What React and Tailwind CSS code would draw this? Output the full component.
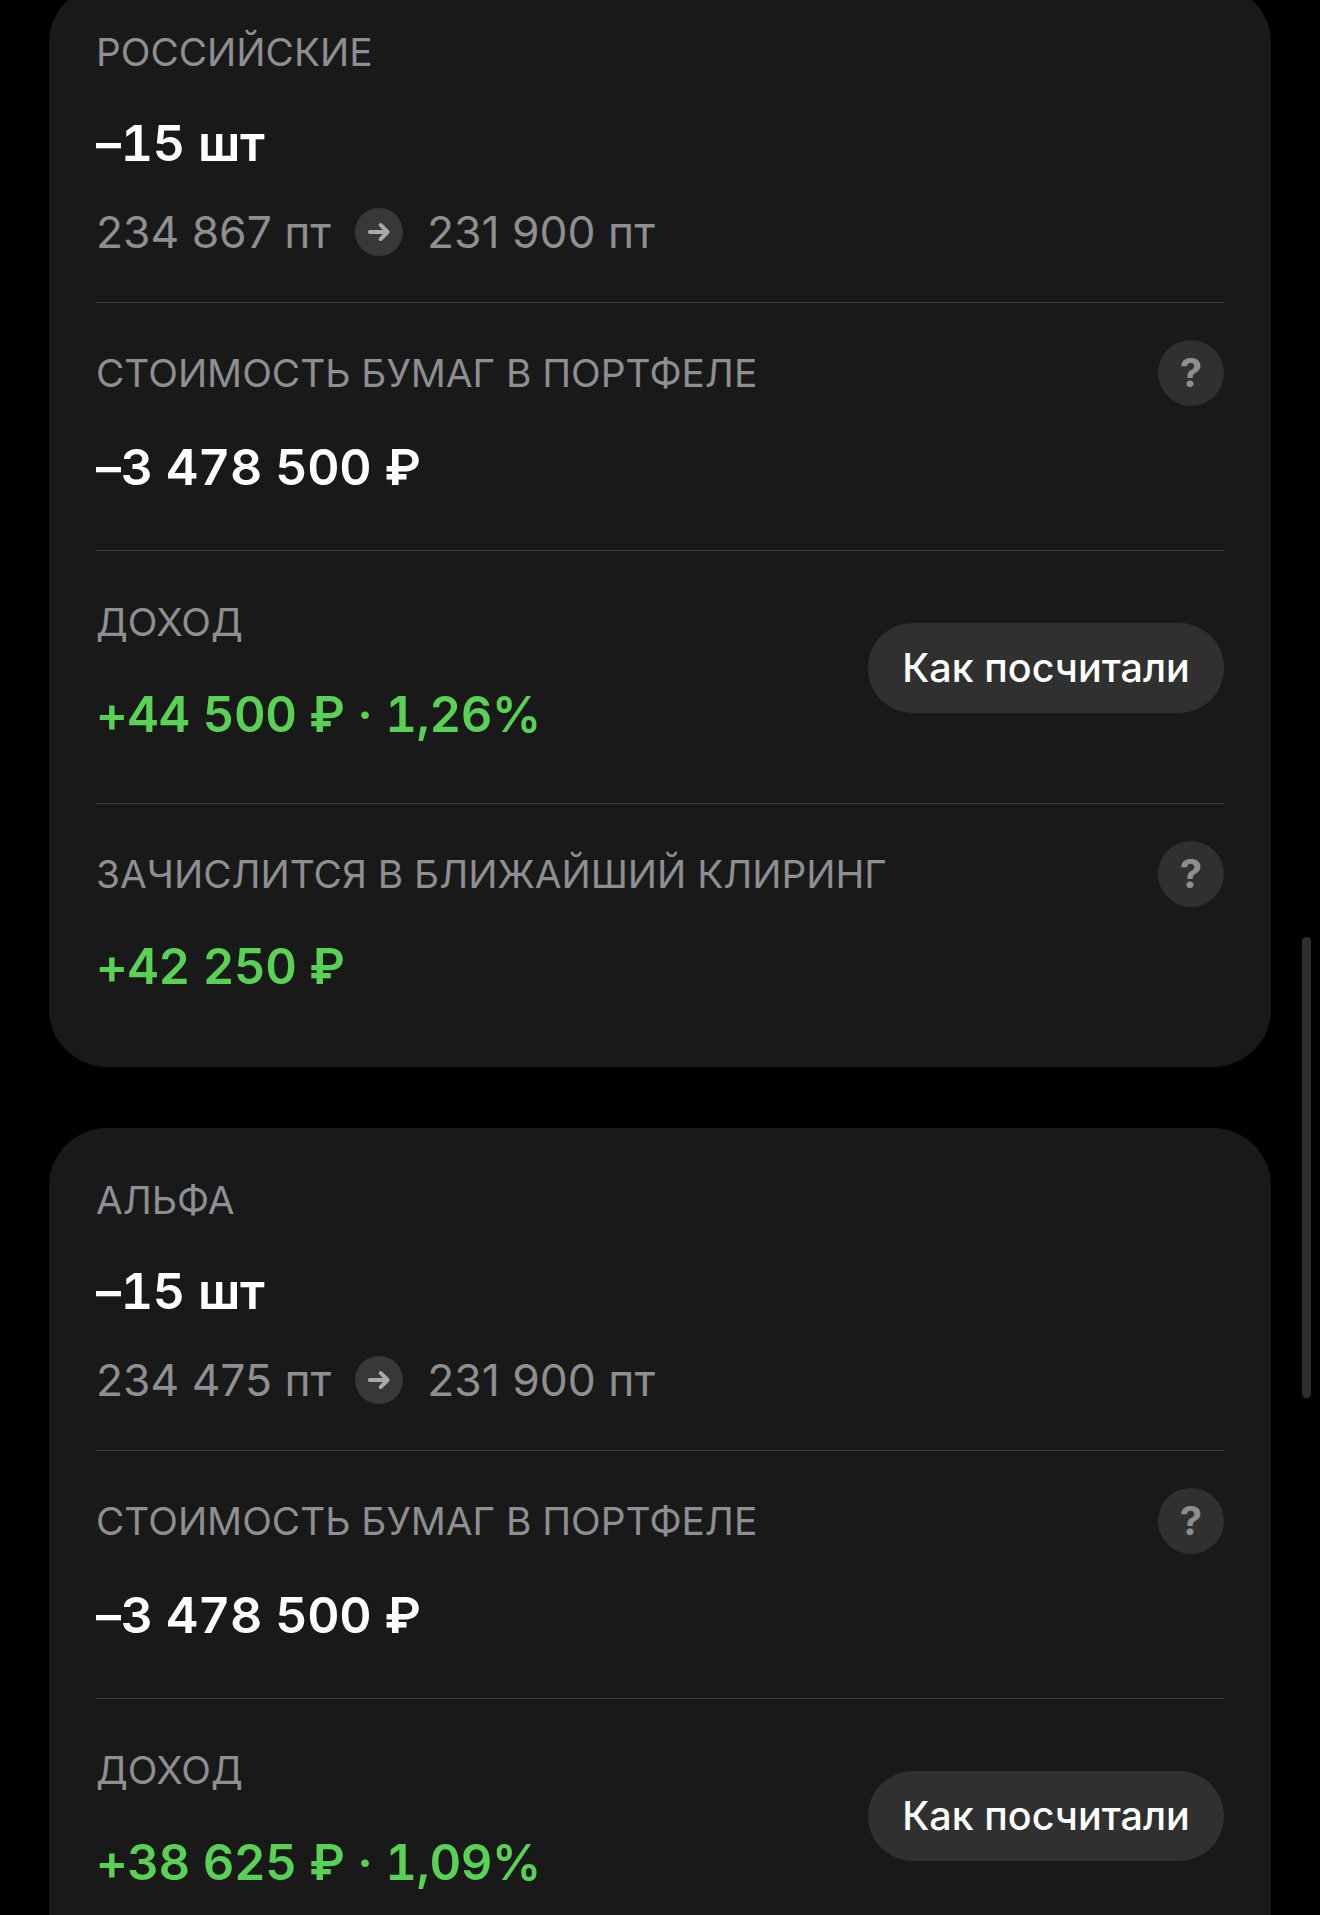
import React from 'react';

const font = { fontFamily: 'Inter, "Noto Sans", sans-serif' };

const Label = ({ children }) => (
  <div className="text-[38.8px] leading-[44px] text-[#8e8e93]">{children}</div>
);

const Value = ({ children, green }) => (
  <div className={`font-semibold leading-[60px] tabular-nums ${green ? 'text-[49px] tracking-[-0.4px] text-[#59d155]' : 'text-[50px] tracking-[-0.3px] text-white'}`}>
    {children}
  </div>
);

const HelpRow = ({ title, value, green, last }) => (
  <div className={last ? 'pt-[37px]' : 'border-b border-[#3a3a3c] pb-[53px] pt-[37px]'}>
    <div className="flex h-[66px] items-center justify-between">
      <Label>{title}</Label>
      <div className="flex h-[66px] w-[66px] items-center justify-center rounded-full bg-[#303031] text-[40px] font-bold text-[#8e8e93]">
        ?
      </div>
    </div>
    <div className={last ? 'mt-[30px]' : 'mt-[31px]'}>
      <Value green={green}>{value}</Value>
    </div>
  </div>
);

const IncomeRow = ({ value }) => (
  <div className="flex items-center justify-between border-b border-[#3a3a3c] pb-[58px] pt-[49px]">
    <div>
      <Label>ДОХОД</Label>
      <div className="mt-[41px]">
        <Value green>{value}</Value>
      </div>
    </div>
    <button className="mb-[10px] flex h-[90px] w-[356px] items-center justify-center rounded-full bg-[#303031] pt-[2px] text-[39.5px] font-medium text-white">
      Как посчитали
    </button>
  </div>
);

const Head = ({ title, from, to }) => (
  <div className="border-b border-[#3a3a3c] pb-[40px]">
    <Label>{title}</Label>
    <div className="mt-[39px]">
      <Value>–15 шт</Value>
    </div>
    <div className="mt-[29px] flex h-[60px] items-center text-[44.4px] text-[#8e8e93]">
      <span>{from}</span>
      <span className="mx-[24px] flex h-[48px] w-[48px] items-center justify-center rounded-full bg-[#38383a]">
        <svg width="26" height="26" viewBox="0 0 24 24" fill="none" stroke="#a8a8ad" strokeWidth="3.6" strokeLinecap="round" strokeLinejoin="round">
          <path d="M3.5 12h16M13.5 5.5l6.5 6.5-6.5 6.5" />
        </svg>
      </span>
      <span>{to}</span>
    </div>
  </div>
);

export default function App() {
  return (
    <div style={font} className="relative h-[1915px] w-[1320px] overflow-hidden bg-black">
      <div className="-mt-[15px] px-[49px]">
        <div className="rounded-[58px] bg-[#191919] px-[47px] pb-[70px] pt-[45px]">
          <Head title="РОССИЙСКИЕ" from="234 867 пт" to="231 900 пт" />
          <HelpRow title="СТОИМОСТЬ БУМАГ В ПОРТФЕЛЕ" value="–3 478 500 ₽" />
          <IncomeRow value="+44 500 ₽ · 1,26%" />
          <HelpRow title="ЗАЧИСЛИТСЯ В БЛИЖАЙШИЙ КЛИРИНГ" value="+42 250 ₽" green last />
        </div>
        <div className="mt-[61px] rounded-[58px] bg-[#191919] px-[47px] pb-[71px] pt-[50px]">
          <Head title="АЛЬФА" from="234 475 пт" to="231 900 пт" />
          <HelpRow title="СТОИМОСТЬ БУМАГ В ПОРТФЕЛЕ" value="–3 478 500 ₽" />
          <IncomeRow value="+38 625 ₽ · 1,09%" />
        </div>
      </div>
      {/* scrollbar */}
      <div className="absolute left-[1302px] top-[937px] h-[461px] w-[9px] rounded-full bg-[#2e2e2e]" />
    </div>
  );
}
